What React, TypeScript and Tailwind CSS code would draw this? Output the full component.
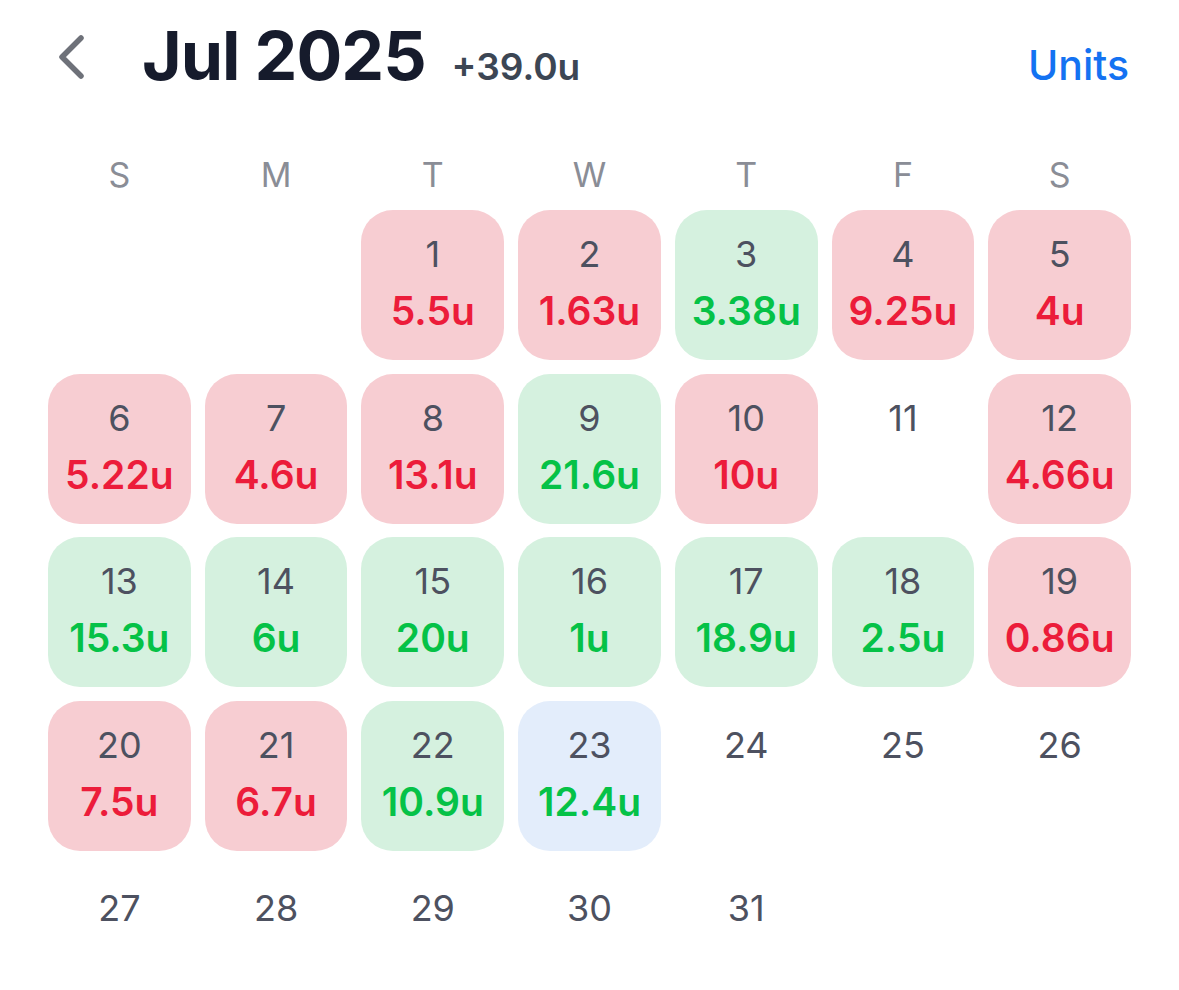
import React from "react";

type Day = { d: number; v?: string; tone?: "loss" | "win" | "today" };

const days: Day[] = [
  { d: 1, v: "5.5u", tone: "loss" },
  { d: 2, v: "1.63u", tone: "loss" },
  { d: 3, v: "3.38u", tone: "win" },
  { d: 4, v: "9.25u", tone: "loss" },
  { d: 5, v: "4u", tone: "loss" },
  { d: 6, v: "5.22u", tone: "loss" },
  { d: 7, v: "4.6u", tone: "loss" },
  { d: 8, v: "13.1u", tone: "loss" },
  { d: 9, v: "21.6u", tone: "win" },
  { d: 10, v: "10u", tone: "loss" },
  { d: 11 },
  { d: 12, v: "4.66u", tone: "loss" },
  { d: 13, v: "15.3u", tone: "win" },
  { d: 14, v: "6u", tone: "win" },
  { d: 15, v: "20u", tone: "win" },
  { d: 16, v: "1u", tone: "win" },
  { d: 17, v: "18.9u", tone: "win" },
  { d: 18, v: "2.5u", tone: "win" },
  { d: 19, v: "0.86u", tone: "loss" },
  { d: 20, v: "7.5u", tone: "loss" },
  { d: 21, v: "6.7u", tone: "loss" },
  { d: 22, v: "10.9u", tone: "win" },
  { d: 23, v: "12.4u", tone: "today" },
  { d: 24 },
  { d: 25 },
  { d: 26 },
  { d: 27 },
  { d: 28 },
  { d: 29 },
  { d: 30 },
  { d: 31 },
];

const weekdays = ["S", "M", "T", "W", "T", "F", "S"];

function DayCell({ day }: { day: Day }) {
  const bg =
    day.tone === "loss"
      ? "bg-[#f7cdd2]"
      : day.tone === "win"
        ? "bg-[#d5f1df]"
        : day.tone === "today"
          ? "bg-[#e3edfb]"
          : "";
  const valueColor = day.tone === "loss" ? "text-[#ec1c3a]" : "text-[#05c247]";
  return (
    <div className={`flex h-[150px] flex-col items-center rounded-[32px] pt-[23px] ${bg}`}>
      <span className="text-[36px] leading-[42px] text-[#4d5160]">{day.d}</span>
      {day.v && (
        <span className={`mt-[15px] text-[39px] font-semibold leading-[42px] ${valueColor}`}>
          {day.v}
        </span>
      )}
    </div>
  );
}

export default function App() {
  return (
    <div
      className="min-h-[990px] w-[1179px] bg-white px-[48px] pt-[15px]"
      style={{ fontFamily: "Inter, 'Noto Sans', sans-serif" }}
    >
      {/* Header row */}
      <div className="flex h-[80px] items-baseline">
        <svg width="40" height="52" viewBox="0 0 40 52" className="ml-[2px] mt-[4px] self-center" fill="none">
          <path d="M31 7 L12 26 L31 45" stroke="#6e7179" strokeWidth="5.5" strokeLinecap="round" strokeLinejoin="round" />
        </svg>
        <span className="ml-[52px] text-[68px] font-bold leading-[80px] tracking-[-1px] text-[#161b2c]">Jul 2025</span>
        <span className="ml-[26px] text-[37px] font-semibold text-[#3c4654]">+39.0u</span>
        <span className="ml-auto mr-[2px] text-[41px] font-medium text-[#1472f2]">Units</span>
      </div>

      {/* Weekday labels */}
      <div className="mt-[60px] grid grid-cols-7 gap-x-[14px]">
        {weekdays.map((w, i) => (
          <div key={i} className="text-center text-[34px] leading-[40px] text-[#8a8d96]">
            {w}
          </div>
        ))}
      </div>

      {/* Calendar grid */}
      <div className="mt-[15px] grid grid-cols-7 gap-x-[14px] gap-y-[13.5px]">
        <div />
        <div />
        {days.map((day) => (
          <DayCell key={day.d} day={day} />
        ))}
      </div>
    </div>
  );
}
